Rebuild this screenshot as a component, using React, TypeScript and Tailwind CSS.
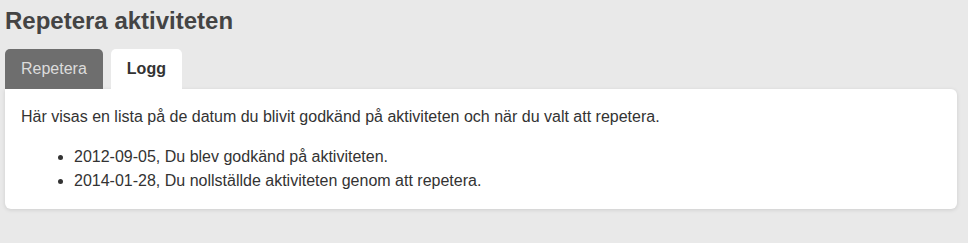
import { useState } from "react";

const entries = [
  "2012-09-05, Du blev godkänd på aktiviteten.",
  "2014-01-28, Du nollställde aktiviteten genom att repetera.",
];

export default function App() {
  const [tab, setTab] = useState<"repetera" | "logg">("logg");

  return (
    <div className="min-h-[243px] w-full bg-[#e9e9e9] px-[5px] pt-2 pb-8 font-['Liberation_Sans',Arial,sans-serif] text-[#333]">
      <h1 className="text-[24px] font-bold text-[#444] leading-[26px]">Repetera aktiviteten</h1>

      <div className="mt-[15px] flex gap-2">
        <button
          onClick={() => setTab("repetera")}
          className={`h-10 rounded-t-[5px] px-4 text-base leading-10 ${
            tab === "repetera" ? "bg-white font-bold text-[#333]" : "bg-[#6e6e6e] text-[#dcdcdc]"
          }`}
        >
          Repetera
        </button>
        <button
          onClick={() => setTab("logg")}
          className={`h-10 rounded-t-[5px] px-4 text-base leading-10 ${
            tab === "logg" ? "bg-white font-bold text-[#333]" : "bg-[#6e6e6e] text-[#dcdcdc]"
          }`}
        >
          Logg
        </button>
      </div>

      <div className="rounded-b-md rounded-tr-md bg-white p-4 text-base leading-6 shadow-[0_1px_4px_rgba(0,0,0,0.12)] mr-[6px]">
        <p className="mb-4">Här visas en lista på de datum du blivit godkänd på aktiviteten och när du valt att repetera.</p>
        <ul className="list-disc pl-[53px]">
          {entries.map((e) => (
            <li key={e}>{e}</li>
          ))}
        </ul>
      </div>
    </div>
  );
}
